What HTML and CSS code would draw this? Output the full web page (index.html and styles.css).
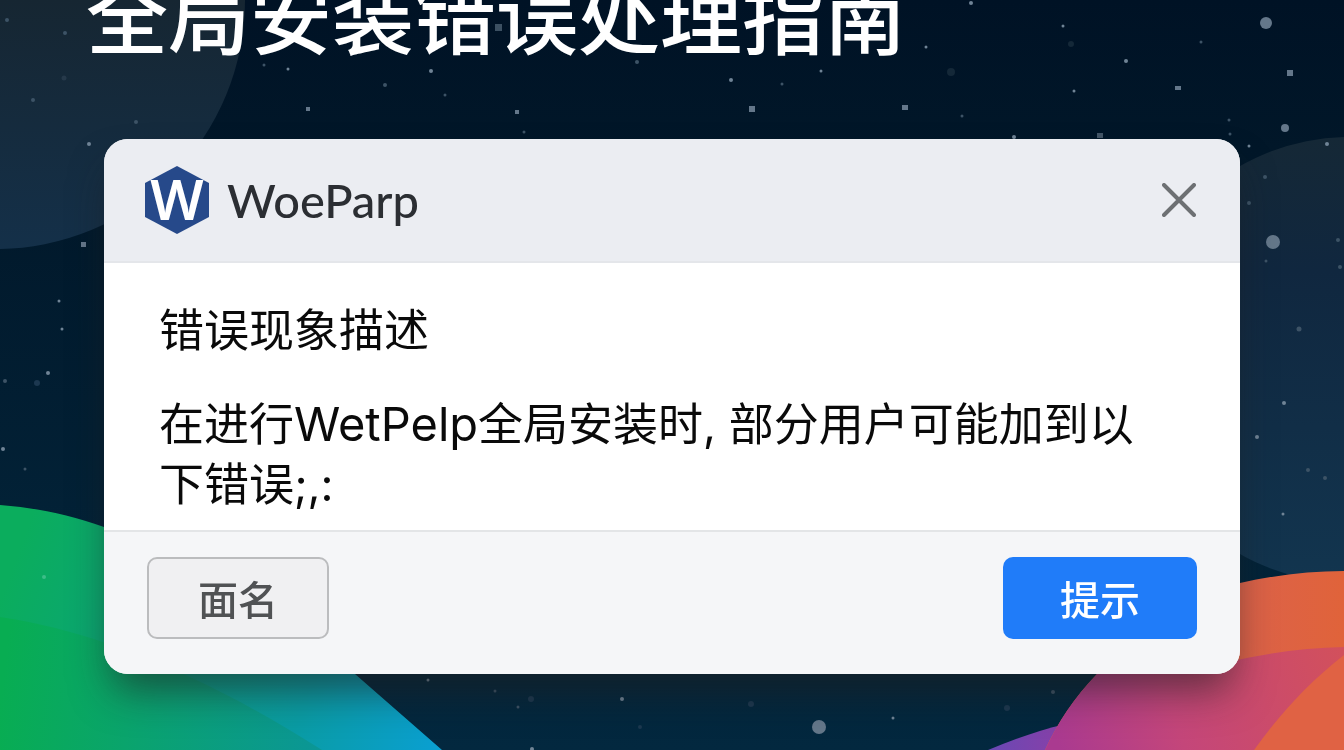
FILE: index.html
```html
<!DOCTYPE html>
<html lang="zh-CN">
<head>
<meta charset="UTF-8">
<meta name="viewport" content="width=device-width, initial-scale=1.0">
<title>全局安装错误处理指南</title>
<link rel="stylesheet" href="styles.css">
</head>
<body>

<!-- Night sky with the coloured hills -->
<svg class="backdrop" viewBox="0 0 1344 750" preserveAspectRatio="xMidYMid slice" aria-hidden="true">
  <defs>
    <linearGradient id="sky" x1="0" y1="0" x2="0" y2="1">
      <stop offset="0" stop-color="#001225" />
      <stop offset="0.2" stop-color="#011729" />
      <stop offset="1" stop-color="#03283f" />
    </linearGradient>
    <linearGradient id="moonLeft" x1="0" y1="0" x2="0" y2="1">
      <stop offset="0.5" stop-color="#162632" />
      <stop offset="1" stop-color="#143049" />
    </linearGradient>
    <linearGradient id="moonRight" x1="0" y1="0" x2="0" y2="1">
      <stop offset="0" stop-color="#152836" />
      <stop offset="0.3" stop-color="#10273f" />
      <stop offset="1" stop-color="#12354f" />
    </linearGradient>
    <linearGradient id="green" gradientUnits="userSpaceOnUse" x1="0" y1="600" x2="430" y2="760">
      <stop offset="0" stop-color="#0bad5d" />
      <stop offset="0.3" stop-color="#0ba477" />
      <stop offset="0.7" stop-color="#0a9ca4" />
      <stop offset="1" stop-color="#0a9fd0" />
    </linearGradient>
    <linearGradient id="greenFront" gradientUnits="userSpaceOnUse" x1="0" y1="700" x2="320" y2="740">
      <stop offset="0" stop-color="#08ad52" />
      <stop offset="0.4" stop-color="#0aa46c" />
      <stop offset="1" stop-color="#0b9696" />
    </linearGradient>
    <linearGradient id="pink" gradientUnits="userSpaceOnUse" x1="1060" y1="750" x2="1344" y2="660">
      <stop offset="0" stop-color="#aa3a90" />
      <stop offset="0.4" stop-color="#c4467a" />
      <stop offset="1" stop-color="#d2505c" />
    </linearGradient>
    <linearGradient id="orange" gradientUnits="userSpaceOnUse" x1="1240" y1="0" x2="1344" y2="0">
      <stop offset="0" stop-color="#dc624a" />
      <stop offset="1" stop-color="#e0633a" />
    </linearGradient>
    <linearGradient id="purple" gradientUnits="userSpaceOnUse" x1="990" y1="0" x2="1062" y2="0">
      <stop offset="0" stop-color="#6a48b4" />
      <stop offset="1" stop-color="#8840a8" />
    </linearGradient>
  </defs>

  <rect width="1344" height="750" fill="url(#sky)" />

  <!-- Moons -->
  <circle cx="-4" cy="0" r="249" fill="url(#moonLeft)" />
  <circle cx="1350" cy="360" r="223" fill="url(#moonRight)" />

  <!-- Bright stars -->
  <g fill="#64778a">
    <circle cx="1266" cy="23" r="6" />
    <circle cx="1273" cy="242" r="7" />
    <circle cx="1285" cy="128" r="4" />
    <circle cx="819" cy="727" r="7" />
    <rect x="1287" y="70" width="6" height="6" />
    <rect x="749" y="106" width="6" height="6" />
    <rect x="902" y="105" width="6" height="5" />
    <rect x="306" y="107" width="4" height="4" />
    <rect x="515" y="110" width="4" height="4" />
    <rect x="495" y="24" width="7" height="7" fill="#3c5062" />
    <rect x="1175" y="86" width="6" height="4" />
    <rect x="1097" y="133" width="6" height="5" fill="#435668" />
    <rect x="81" y="242" width="5" height="5" />
  </g>

  <!-- Small stars -->
  <g fill="#708496">
    <circle cx="89" cy="144" r="2" />
    <circle cx="288" cy="69" r="1.5" />
    <circle cx="431" cy="71" r="2" />
    <circle cx="971" cy="3" r="2" />
    <circle cx="926" cy="47" r="1.5" />
    <circle cx="1063" cy="26" r="1.5" />
    <circle cx="1126" cy="61" r="2" />
    <circle cx="1074" cy="91" r="1.5" />
    <circle cx="1014" cy="137" r="2" />
    <circle cx="1327" cy="144" r="2" />
    <circle cx="1249" cy="146" r="1.5" />
    <circle cx="731" cy="80" r="2" />
    <circle cx="821" cy="71" r="1.5" />
    <circle cx="59" cy="301" r="1.5" />
    <circle cx="62" cy="329" r="1.5" />
    <circle cx="48" cy="373" r="2" />
    <circle cx="3" cy="449" r="2" />
    <circle cx="1284" cy="403" r="2" />
    <circle cx="1257" cy="437" r="2" />
    <circle cx="1283" cy="514" r="1.5" />
    <circle cx="622" cy="699" r="2" />
    <circle cx="532" cy="749" r="2" />
    <circle cx="893" cy="718" r="1.5" />
    <circle cx="428" cy="680" r="1.5" />
  </g>

  <!-- Faint stars -->
  <g fill="#3d5366">
    <circle cx="7" cy="20" r="2" />
    <circle cx="65" cy="33" r="2" />
    <circle cx="64" cy="78" r="2.5" fill="#26394a" />
    <circle cx="33" cy="100" r="2" />
    <circle cx="136" cy="122" r="2" />
    <circle cx="264" cy="65" r="1.5" />
    <circle cx="385" cy="85" r="2" />
    <circle cx="445" cy="95" r="1.5" />
    <circle cx="524" cy="132" r="1.5" />
    <circle cx="637" cy="62" r="2" />
    <circle cx="782" cy="84" r="1.5" />
    <circle cx="951" cy="72" r="4" fill="#142838" />
    <circle cx="1071" cy="44" r="3" fill="#142838" />
    <circle cx="1201" cy="42" r="1.5" />
    <circle cx="962" cy="116" r="1.5" />
    <circle cx="1229" cy="120" r="1.5" />
    <circle cx="1230" cy="134" r="1.5" />
    <circle cx="1265" cy="177" r="2" />
    <circle cx="1249" cy="203" r="2" />
    <circle cx="1338" cy="240" r="2" />
    <circle cx="1340" cy="267" r="2" />
    <circle cx="1266" cy="261" r="1.5" />
    <circle cx="1299" cy="329" r="2.5" />
    <circle cx="1308" cy="470" r="2" />
    <circle cx="1325" cy="478" r="2" />
    <circle cx="5" cy="381" r="2" />
    <circle cx="37" cy="383" r="3" fill="#1c3850" />
    <circle cx="25" cy="469" r="1.5" />
    <circle cx="495" cy="691" r="1.5" />
    <circle cx="531" cy="699" r="3" fill="#1c3850" />
    <circle cx="518" cy="707" r="1.5" />
    <circle cx="640" cy="727" r="2" fill="#1c3850" />
    <circle cx="751" cy="704" r="3" fill="#1c3850" />
    <circle cx="1007" cy="708" r="3" fill="#1c3850" />
    <circle cx="1053" cy="692" r="2" />
  </g>

  <!-- Green hills -->
  <path d="M 0,505 C 38,508 70,515 104,527 C 200,558 290,620 355,674 L 442,750 L 0,750 Z" fill="url(#green)" />
  <path d="M 0,617 C 75,628 140,654 190,677 C 240,700 280,724 322,750 L 0,750 Z" fill="url(#greenFront)" />
  <circle cx="44" cy="577" r="2" fill="#3dbd88" />

  <!-- Orange and pink hills -->
  <path d="M 988,750 C 1012,740 1036,731 1066,724 L 1090,750 Z" fill="url(#purple)" />
  <path d="M 1045,750 C 1058,722 1074,698 1097,674 C 1136,626 1190,594 1240,583 C 1276,575 1310,571 1344,571 L 1344,750 Z" fill="url(#orange)" />
  <path d="M 1045,750 C 1058,722 1074,698 1097,674 L 1180,674 C 1236,658 1290,648 1344,647 L 1344,750 Z" fill="url(#pink)" />
  <path d="M 1344,655 C 1308,683 1280,714 1254,750 L 1344,750 Z" fill="#e06244" />
</svg>

<main class="page">
  <h1 class="page-title">全局安装错误处理指南</h1>

  <section class="dialog" role="dialog" aria-labelledby="dialog-name">
    <header class="dialog-header">
      <svg class="logo" viewBox="0 0 64 68" aria-hidden="true">
        <path d="M 32,0 L 64,17 L 64,51 L 32,68 L 0,51 L 0,17 Z" fill="#26498a" />
        <text class="logo-letter" x="32" y="54" text-anchor="middle">W</text>
      </svg>
      <span class="brand" id="dialog-name">WoeParp</span>
      <button class="close" type="button" aria-label="关闭">
        <svg viewBox="0 0 34 34" width="34" height="34">
          <path d="M 2,2 L 32,32 M 32,2 L 2,32" />
        </svg>
      </button>
    </header>

    <div class="dialog-body">
      <h2 class="subtitle">错误现象描述</h2>
      <p class="message">在进行<span class="product">WetPelp</span>全局安装时, 部分用户可能加到以下错误;,:</p>
    </div>

    <footer class="dialog-footer">
      <button class="btn btn-plain" type="button">面名</button>
      <button class="btn btn-primary" type="button">提示</button>
    </footer>
  </section>
</main>

</body>
</html>
```
FILE: styles.css
```css
* {
  box-sizing: border-box;
}

body {
  margin: 0;
  background-color: #011729;
  font-family: Inter, "Noto Sans CJK SC", sans-serif;
  color: #0a0a0a;
}

.backdrop {
  position: fixed;
  top: 0;
  left: 0;
  width: 100%;
  height: 100%;
}

.page {
  position: relative;
  min-height: 100vh;
  padding: 0 104px 76px;
  overflow: hidden;
}

/* The title runs off the top edge */
.page-title {
  margin: -28px -18px 85px;
  font-family: "Noto Sans CJK SC", sans-serif;
  font-size: 82px;
  line-height: 82px;
  font-weight: 500;
  color: white;
}

.dialog {
  border-radius: 24px;
  background-color: white;
  overflow: hidden;
  box-shadow: 0 24px 40px -8px rgba(30, 30, 30, 0.6);
}

.dialog-header {
  display: flex;
  align-items: center;
  gap: 18px;
  height: 124px;
  padding: 0 44px 0 41px;
  background-color: #ebedf2;
  border-bottom: 2px solid #e4e6ea;
}

.logo {
  width: 64px;
  height: 68px;
  overflow: visible;
}

.logo-letter {
  font-family: "Noto Sans", "Open Sans", sans-serif;
  font-size: 56px;
  font-weight: 600;
  fill: white;
}

.brand {
  font-family: Lato, sans-serif;
  font-size: 47px;
  line-height: 60px;
  font-weight: 500;
  color: #2b2e33;
}

.close {
  display: flex;
  margin-left: auto;
  padding: 0;
  border: 0;
  background: none;
  cursor: pointer;
}

.close path {
  fill: none;
  stroke: #6d7073;
  stroke-width: 4;
  stroke-linecap: round;
}

.dialog-body {
  padding: 38px 80px 15px 55px;
}

.subtitle,
.message {
  margin: 0;
  font-size: 45px;
  line-height: 60px;
  font-weight: 400;
}

.subtitle {
  margin-bottom: 34px;
}

.product {
  font-size: 47px;
  line-height: 47px;
}

.dialog-footer {
  display: flex;
  justify-content: space-between;
  padding: 25px 43px 35px;
  background-color: #f5f6f8;
  border-top: 2px solid #e3e5e7;
}

.btn {
  height: 82px;
  border-radius: 10px;
  font-family: "Noto Sans CJK SC", sans-serif;
  font-size: 40px;
  line-height: 60px;
  font-weight: 500;
  cursor: pointer;
}

.btn-plain {
  padding: 0 49px;
  border: 2px solid #bbbcbe;
  background-color: #f0f0f2;
  color: #505254;
}

.btn-primary {
  padding: 0 57px;
  border: 0;
  background-color: #207cf9;
  color: white;
}
```
